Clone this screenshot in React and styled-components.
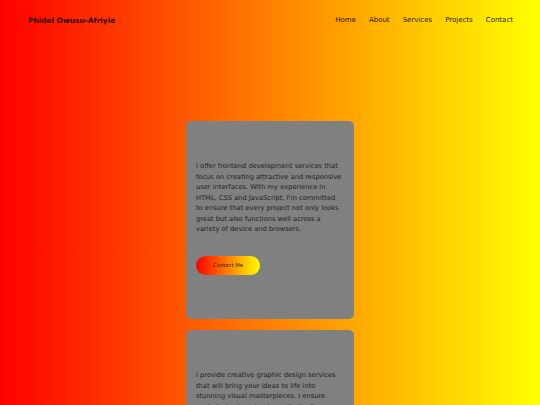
import React from 'react';
import styled, { createGlobalStyle } from 'styled-components';

const GlobalStyle = createGlobalStyle`
  * { box-sizing: border-box; }
  html, body {
    margin: 0;
    padding: 0;
  }
  body {
    font-family: 'DejaVu Sans', 'Open Sans', sans-serif;
    color: #222;
    background: linear-gradient(to right, #ff0000, #ffff00);
    background-attachment: fixed;
    min-height: 100vh;
  }
`;

const services = [
  "I offer frontend development services that focus on creating attractive and responsive user interfaces. With my experience in HTML, CSS and JavaScript, I'm committed to ensure that every project not only looks great but also functions well across a variety of device and browsers.",
  'I provide creative graphic design services that will bring your ideas to life into stunning visual masterpieces. I ensure each design is not only aesthetically pleasing but also effectively communicates your message.',
];

const App = () => (
  <>
    <GlobalStyle />
    <Page>
      <Header>
        <Logo>Phidel Owusu-Afriyie</Logo>
        <Nav>
          <NavLink href="#">Home</NavLink>
          <NavLink href="#">About</NavLink>
          <NavLink href="#">Services</NavLink>
          <NavLink href="#">Projects</NavLink>
          <NavLink href="#">Contact</NavLink>
        </Nav>
      </Header>
      <Services>
        {services.map((text, i) => (
          <Card key={i}>
            <CardText>{text}</CardText>
            <Button>Contact Me</Button>
          </Card>
        ))}
      </Services>
    </Page>
  </>
);

const Page = styled.div`
  min-height: 100vh;
`;

const Header = styled.header`
  display: flex;
  align-items: center;
  justify-content: space-between;
  height: 40px;
  padding: 0 27px 0 28px;
`;

const Logo = styled.div`
  font-size: 7.4px;
  font-weight: bold;
  color: #2a0a00;
`;

const Nav = styled.nav`
  display: flex;
  gap: 13px;
`;

const NavLink = styled.a`
  font-size: 7px;
  color: #2a1a00;
  text-decoration: none;
`;

const Services = styled.section`
  display: flex;
  flex-direction: column;
  align-items: center;
  gap: 11px;
  padding-top: 81px;
  padding-bottom: 40px;
`;

const Card = styled.div`
  width: 168px;
  min-height: 198px;
  background: #808080;
  border-radius: 5px;
  padding: 40px 12px 40px 10px;
`;

const CardText = styled.p`
  margin: 0 0 21px;
  font-size: 6.7px;
  line-height: 10.5px;
  color: #222;
`;

const Button = styled.button`
  display: block;
  width: 64px;
  height: 19px;
  border: none;
  border-radius: 10px;
  background: linear-gradient(to right, #ff0000, #ffff00);
  font-family: inherit;
  font-size: 5.3px;
  color: #222;
  padding: 0;
`;

export default App;
